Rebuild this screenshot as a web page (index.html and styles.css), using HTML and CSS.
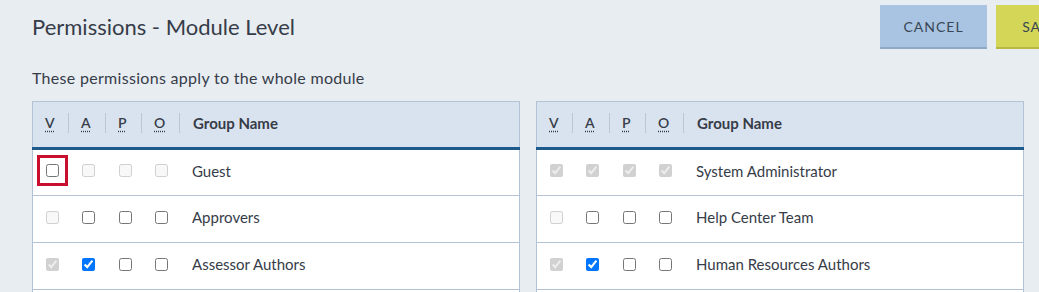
FILE: index.html
```html
<!DOCTYPE html>
<html lang="en">
<head>
<meta charset="utf-8">
<title>Permissions - Module Level</title>
<link rel="stylesheet" href="styles.css">
</head>
<body>
<div class="page">
  <div class="topbar">
    <h1 class="title">Permissions - Module Level</h1>
    <div class="actions">
      <button class="btn btn-cancel" type="button">CANCEL</button>
      <button class="btn btn-save" type="button">SAVE</button>
    </div>
  </div>
  <p class="subtitle">These permissions apply to the whole module</p>
  <div class="tables">
    <table class="perm">
      <thead>
        <tr>
          <th class="c1"><div class="hcell"><abbr title="View">V</abbr></div></th>
          <th class="c2"><div class="hcell"><abbr title="Add">A</abbr></div></th>
          <th class="c3"><div class="hcell"><abbr title="Publish">P</abbr></div></th>
          <th class="c4"><div class="hcell"><abbr title="Own">O</abbr></div></th>
          <th class="cname">Group Name</th>
        </tr>
      </thead>
      <tbody>
        <tr>
          <td><input type="checkbox" class="focus"></td>
          <td><input type="checkbox" disabled></td>
          <td><input type="checkbox" disabled></td>
          <td><input type="checkbox" disabled></td>
          <td class="name">Guest</td>
        </tr>
        <tr>
          <td><input type="checkbox" disabled></td>
          <td><input type="checkbox"></td>
          <td><input type="checkbox"></td>
          <td><input type="checkbox"></td>
          <td class="name">Approvers</td>
        </tr>
        <tr>
          <td><input type="checkbox" checked disabled></td>
          <td><input type="checkbox" checked></td>
          <td><input type="checkbox"></td>
          <td><input type="checkbox"></td>
          <td class="name">Assessor Authors</td>
        </tr>
        <tr>
          <td><input type="checkbox" checked disabled></td>
          <td><input type="checkbox"></td>
          <td><input type="checkbox"></td>
          <td><input type="checkbox"></td>
          <td class="name"></td>
        </tr>
      </tbody>
    </table>
    <table class="perm">
      <thead>
        <tr>
          <th class="c1"><div class="hcell"><abbr title="View">V</abbr></div></th>
          <th class="c2"><div class="hcell"><abbr title="Add">A</abbr></div></th>
          <th class="c3"><div class="hcell"><abbr title="Publish">P</abbr></div></th>
          <th class="c4"><div class="hcell"><abbr title="Own">O</abbr></div></th>
          <th class="cname">Group Name</th>
        </tr>
      </thead>
      <tbody>
        <tr>
          <td><input type="checkbox" checked disabled></td>
          <td><input type="checkbox" checked disabled></td>
          <td><input type="checkbox" checked disabled></td>
          <td><input type="checkbox" checked disabled></td>
          <td class="name">System Administrator</td>
        </tr>
        <tr>
          <td><input type="checkbox" disabled></td>
          <td><input type="checkbox"></td>
          <td><input type="checkbox"></td>
          <td><input type="checkbox"></td>
          <td class="name">Help Center Team</td>
        </tr>
        <tr>
          <td><input type="checkbox" checked disabled></td>
          <td><input type="checkbox" checked></td>
          <td><input type="checkbox"></td>
          <td><input type="checkbox"></td>
          <td class="name">Human Resources Authors</td>
        </tr>
        <tr>
          <td><input type="checkbox" checked disabled></td>
          <td><input type="checkbox"></td>
          <td><input type="checkbox"></td>
          <td><input type="checkbox"></td>
          <td class="name"></td>
        </tr>
      </tbody>
    </table>
  </div>
</div>
</body>
</html>
```
FILE: styles.css
```css
html, body {
  margin: 0;
  padding: 0;
  background: #e8edf2;
  overflow: hidden;
}
body {
  font-family: Lato, "Open Sans", sans-serif;
  color: #363c48;
}
.page {
  padding: 0 15px 0 32px;
}
.topbar {
  display: flex;
  align-items: center;
  justify-content: space-between;
  padding-top: 5px;
  margin-right: -62px;
}
.title {
  margin: 0;
  font-size: 22px;
  font-weight: 400;
  color: #363c48;
  line-height: 44px;
}
.actions {
  display: flex;
  gap: 9px;
}
.btn {
  height: 44px;
  border: 0;
  border-bottom: 2px solid;
  font-family: inherit;
  font-size: 14px;
  letter-spacing: 1px;
  color: #3a4654;
  padding: 0;
}
.btn-cancel {
  width: 107px;
  background: #a8c4e2;
  border-bottom-color: #8ea8c6;
}
.btn-save {
  width: 90px;
  background: #d4d657;
  border-bottom-color: #b9b845;
}
.subtitle {
  margin: 19px 0 0;
  font-size: 16px;
  letter-spacing: 0.3px;
  line-height: 20px;
  color: #363c48;
}
.tables {
  display: grid;
  grid-template-columns: 1fr 1fr;
  gap: 16px;
  margin-top: 13px;
}
.perm {
  border-collapse: collapse;
  background: #fff;
  border: 1px solid #b3c2d4;
  width: 100%;
}
.perm th {
  background: #d9e3ef;
  height: 41px;
  padding: 0 0 4px 12px;
  text-align: left;
  font-size: 15px;
  font-weight: 700;
  color: #363c48;
  border-bottom: 3px solid #1b5a8a;
}
.perm th.c1 { width: 24px; }
.perm th.c2 { width: 25px; }
.perm th.c3 { width: 24px; }
.perm th.c4 { width: 26px; }
.perm th.cname { padding-left: 13px; }
.hcell {
  height: 20px;
  line-height: 20px;
  border-right: 1px solid #b9c6d3;
  font-weight: 600;
  font-size: 14px;
}
abbr {
  text-decoration: underline dotted;
  text-underline-offset: 3px;
  cursor: help;
}
.perm td {
  height: 42px;
  padding: 0 0 4px 9px;
  border-bottom: 1px solid #b3c2d4;
  vertical-align: middle;
}
.perm tbody tr:first-child td {
  height: 41px;
}
.perm td input {
  display: block;
  margin: 0 0 0 4px;
  width: 13px;
  height: 13px;
}
.perm td.name {
  padding-left: 12px;
  font-size: 15px;
  color: #363c48;
}
.focus {
  outline: 3px solid #c8102e;
  outline-offset: 6px;
}
```
